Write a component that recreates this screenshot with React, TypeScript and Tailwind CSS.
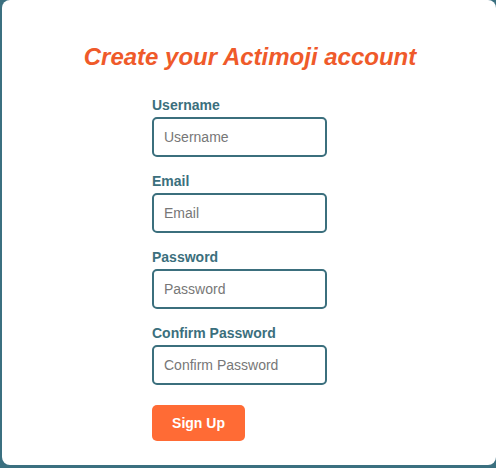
const fields = [
  { label: 'Username', type: 'text' },
  { label: 'Email', type: 'email' },
  { label: 'Password', type: 'password' },
  { label: 'Confirm Password', type: 'password' },
]

export default function App() {
  return (
    <div
      className="flex h-[468px] w-[500px] overflow-hidden bg-[#3b7080]"
      style={{ fontFamily: '"Liberation Sans", Arial, sans-serif' }}
    >
      <div className="ml-[2px] h-[465px] w-[494px] rounded-[8px] bg-white pt-[43px]">
        <h1 className="pl-[2px] text-center text-[24px] leading-[28px] font-bold italic text-[#ef5a2a]">
          Create your Actimoji account
        </h1>
        <form className="mt-[26px] flex flex-col pl-[150px]" onSubmit={(e) => e.preventDefault()}>
          {fields.map((f) => (
            <div key={f.label} className="mb-[16px] flex flex-col">
              <label className="mb-[4px] text-[14px] leading-[16px] font-bold text-[#3b6f7d]">
                {f.label}
              </label>
              <input
                type={f.type}
                placeholder={f.label}
                className="h-[40px] w-[175px] rounded-[5px] border-2 border-[#3b6f7d] bg-white px-[10px] text-[14px] text-[#333] outline-none placeholder:text-[#777]"
              />
            </div>
          ))}
          <button
            type="submit"
            className="mt-[4px] h-[36px] w-[93px] rounded-[5px] bg-[#ff6b35] text-[14px] font-bold text-white"
          >
            Sign Up
          </button>
        </form>
      </div>
      <div className="h-full flex-1 bg-white" />
    </div>
  )
}
